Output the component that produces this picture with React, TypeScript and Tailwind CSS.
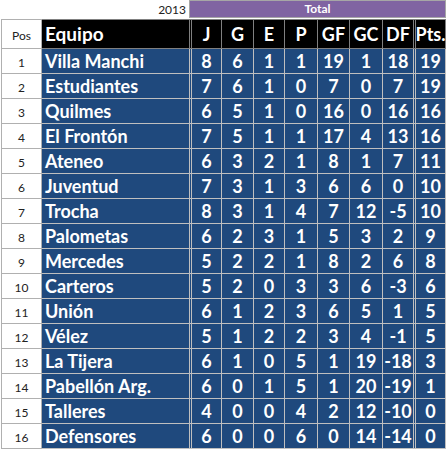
import React from "react";

const rows: [string, number, number, number, number, number, number, number, number][] = [
  ["Villa Manchi", 8, 6, 1, 1, 19, 1, 18, 19],
  ["Estudiantes", 7, 6, 1, 0, 7, 0, 7, 19],
  ["Quilmes", 6, 5, 1, 0, 16, 0, 16, 16],
  ["El Frontón", 7, 5, 1, 1, 17, 4, 13, 16],
  ["Ateneo", 6, 3, 2, 1, 8, 1, 7, 11],
  ["Juventud", 7, 3, 1, 3, 6, 6, 0, 10],
  ["Trocha", 8, 3, 1, 4, 7, 12, -5, 10],
  ["Palometas", 6, 2, 3, 1, 5, 3, 2, 9],
  ["Mercedes", 5, 2, 2, 1, 8, 2, 6, 8],
  ["Carteros", 5, 2, 0, 3, 3, 6, -3, 6],
  ["Unión", 6, 1, 2, 3, 6, 5, 1, 5],
  ["Vélez", 5, 1, 2, 2, 3, 4, -1, 5],
  ["La Tijera", 6, 1, 0, 5, 1, 19, -18, 3],
  ["Pabellón Arg.", 6, 0, 1, 5, 1, 20, -19, 1],
  ["Talleres", 4, 0, 0, 4, 2, 12, -10, 0],
  ["Defensores", 6, 0, 0, 6, 0, 14, -14, 0],
];

const numWidths = ["w-[30px]", "w-[32px]", "w-[31px]", "w-[33px]", "w-[32px]", "w-[33px]", "w-[33px]", "w-[30px]"];
const headers = ["J", "G", "E", "P", "GF", "GC", "DF", "Pts."];

const bold = { fontFamily: "Lato, 'Open Sans', sans-serif" };

export default function App() {
  return (
    <div className="w-[447px] h-[449px] bg-white overflow-hidden" style={{ fontFamily: "Lato, 'Liberation Sans', sans-serif" }}>
      {/* top row */}
      <div className="flex h-[19px]">
        <div className="w-[189px] flex items-center justify-end pr-[3px] text-[12px] text-[#222]">2013</div>
        <div className="w-[257px] h-[18px] border border-[#a6a6a6] bg-[#8064a2] flex items-center justify-center text-white text-[12px] font-bold">
          Total
        </div>
      </div>
      {/* header */}
      <div className="flex h-[30px] ml-px">
        <div className="w-[41px] border-l border-t border-b border-r border-[#b0b0b0] bg-white flex items-center justify-center text-[12px] text-[#222] pt-[4px]">
          Pos
        </div>
        <div className="w-[150px] bg-black border-t border-b border-[#808080] border-r-[3px] border-double flex items-center pl-[3px] text-white text-[19px] font-bold" style={bold}>
          Equipo
        </div>
        {headers.map((h, i) => (
          <div
            key={h}
            className={`${numWidths[i]} bg-black border-t border-b border-[#808080] ${i === 6 ? "border-r-[3px] border-double" : "border-r"} flex items-center justify-center text-white text-[18px] font-bold`}
            style={bold}
          >
            {h}
          </div>
        ))}
      </div>
      {rows.map((r, idx) => (
        <div key={r[0]} className="flex h-[25px] ml-px">
          <div className="w-[41px] border-l border-r border-b border-[#b0b0b0] bg-white flex items-center justify-center text-[12px] text-[#222] pt-[3px]">
            {idx + 1}
          </div>
          <div className="w-[150px] bg-[#1f497d] border-b border-[#bfbfbf] border-r-[3px] border-double flex items-center pl-[3px] text-white text-[18px] font-bold" style={bold}>
            {r[0]}
          </div>
          {r.slice(1).map((v, i) => (
            <div
              key={i}
              className={`${numWidths[i]} bg-[#1f497d] border-b border-[#bfbfbf] ${i === 6 ? "border-r-[3px] border-double" : "border-r"} flex items-center justify-center text-white text-[18px] font-bold`}
              style={bold}
            >
              {v}
            </div>
          ))}
        </div>
      ))}
    </div>
  );
}
